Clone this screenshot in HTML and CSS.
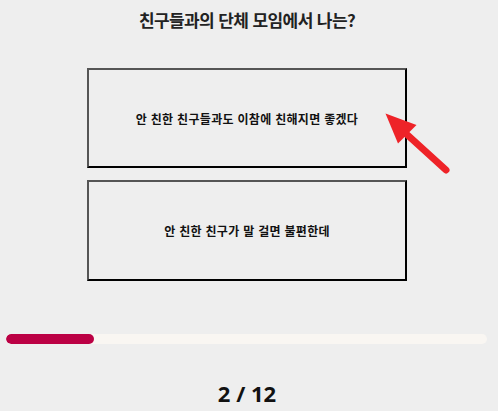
FILE: index.html
```html
<!DOCTYPE html>
<html lang="ko">
<head>
<meta charset="utf-8">
<link rel="stylesheet" href="styles.css">
</head>
<body>
<div class="page">
  <h1 class="title">친구들과의 단체 모임에서 나는?</h1>
  <div class="options">
    <button class="option">안 친한 친구들과도 이참에 친해지면 좋겠다</button>
    <button class="option">안 친한 친구가 말 걸면 불편한데</button>
  </div>
  <div class="progress"><div class="progress-fill" style="width: 88px"></div></div>
  <div class="counter">2 / 12</div>
  <svg class="arrow" width="80" height="80" viewBox="0 0 80 80">
    <line x1="22" y1="25" x2="66" y2="65" stroke="#ee2328" stroke-width="7" stroke-linecap="round"/>
    <polygon points="5.5,8.5 36.5,20 18,38.5" fill="#ee2328"/>
  </svg>
</div>
</body>
</html>
```
FILE: styles.css
```css
html, body {
  margin: 0;
  padding: 0;
  background: #eeeeee;
}
body {
  font-family: "Noto Sans CJK KR", "Noto Sans", sans-serif;
  color: #111;
}
.page {
  position: relative;
  width: 494px;
  height: 411px;
  display: flex;
  flex-direction: column;
  align-items: center;
}
.title {
  margin: 9px 0 0;
  font-size: 17px;
  line-height: 22px;
  font-weight: 700;
  letter-spacing: -0.6px;
  color: #222;
}
.options {
  margin-top: 37px;
  display: flex;
  flex-direction: column;
  gap: 12px;
}
.option {
  width: 320px;
  height: 100px;
  box-sizing: border-box;
  border: 2px solid;
  border-color: #555 #000 #000 #555;
  background: #eeeeee;
  font-family: "Noto Sans CJK KR", sans-serif;
  font-size: 12px;
  font-weight: 700;
  letter-spacing: 0.3px;
  color: #111;
  padding: 0;
}
.option + .option {
  height: 101px;
}
.progress {
  margin-top: 53px;
  align-self: flex-start;
  margin-left: 6px;
  width: 481px;
  height: 10px;
  border-radius: 5px;
  background: #f9f6f2;
  overflow: hidden;
}
.progress-fill {
  height: 100%;
  border-radius: 5px;
  background: #bb0044;
}
.counter {
  margin-top: 34px;
  font-family: "Noto Sans", sans-serif;
  font-size: 22px;
  line-height: 30px;
  font-weight: 700;
  color: #111;
}
.arrow {
  position: absolute;
  left: 380px;
  top: 105px;
}
```
